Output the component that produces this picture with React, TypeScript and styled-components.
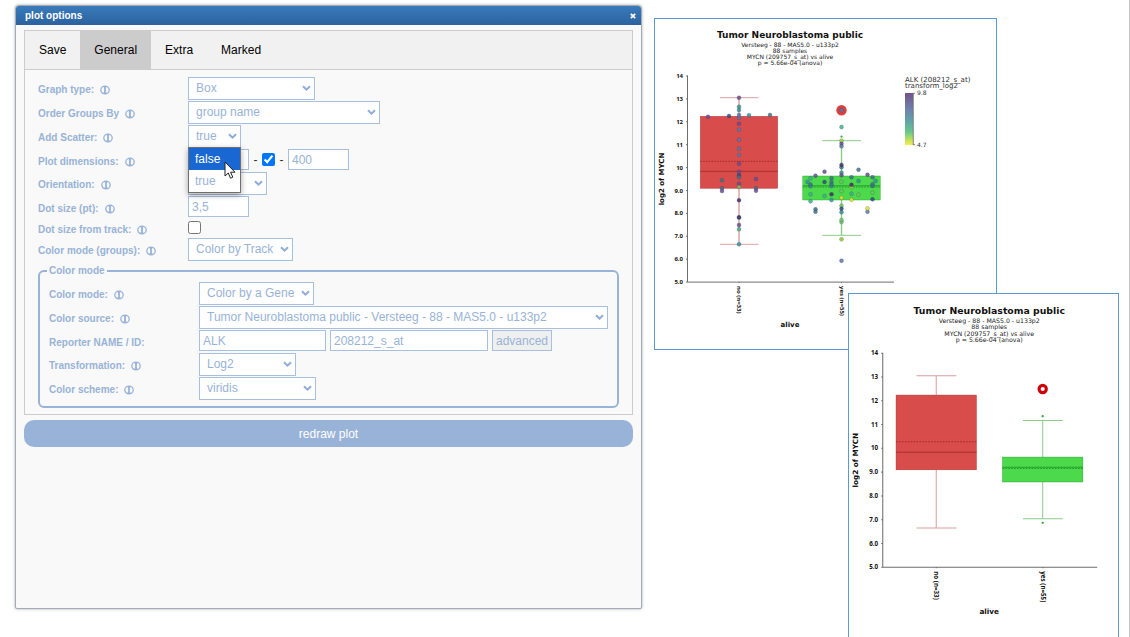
import React, { useId } from "react";
import styled, { createGlobalStyle } from "styled-components";

const ink = "#98b3d7";
const line = "#a8c0df";
const sans = `"Liberation Sans", Arial, sans-serif`;
const plotSans = `"DejaVu Sans", Verdana, sans-serif`;
const tickSans = `"Noto Sans", "Open Sans", sans-serif`;

const GlobalStyle = createGlobalStyle`
  *, *::before, *::after { box-sizing: border-box; }
  body { margin: 0; background: #fff; font-family: ${sans}; font-size: 12px; }
  button, input, select { font-family: inherit; font-size: 12px; }
`;

const Page = styled.main`
  display: grid;
  grid-template-columns: minmax(0, 627fr) minmax(0, 487fr);
  grid-template-rows: minmax(0, 1fr);
  height: 100vh;
  padding-left: 15px;
  border-right: 1px solid #c4c4c4;
  overflow: hidden;
`;

const Dialog = styled.section`
  display: flex;
  flex-direction: column;
  margin: 5px 0 28px;
  border: 1px solid #a3abb8;
  border-radius: 4px 4px 2px 2px;
  background: #f9f9f9;
  box-shadow: 0 0 3px rgba(0, 0, 0, 0.35);
`;

const TitleBar = styled.header`
  display: flex;
  align-items: center;
  justify-content: space-between;
  height: 19px;
  padding: 0 5px 0 9px;
  border-radius: 3px 3px 0 0;
  background: linear-gradient(#3a7abb, #2b629f);
  color: #fff;
`;

const DialogTitle = styled.h1`
  margin: 0;
  font-size: 10px;
  line-height: 12px;
  font-weight: bold;
`;

const CloseButton = styled.button`
  display: flex;
  padding: 1px 0 0;
  border: 0;
  background: none;
  color: #fff;
`;

const DialogBody = styled.div`
  display: flex;
  flex-direction: column;
  gap: 5px;
  padding: 5px 8px;
`;

const Panel = styled.div`
  border: 1px solid #ccc;
`;

const Tabs = styled.nav`
  display: flex;
  height: 39px;
  border-bottom: 1px solid #ccc;
  background: #f1f1f1;
`;

const Tab = styled.button<{ $active?: boolean }>`
  padding: 0 14px;
  border: 0;
  background: ${(p) => (p.$active ? "#ccc" : "transparent")};
  color: #000;
`;

const Form = styled.form`
  padding: 7px 13px 6px;
`;

const Row = styled.div<{ $kind?: "select" | "input" | "check" }>`
  display: grid;
  grid-template-columns: 150px minmax(0, 1fr);
  align-items: start;
  height: ${(p) => (p.$kind === "input" ? 23 : p.$kind === "check" ? 19 : 24)}px;
`;

const LabelCell = styled.div`
  display: flex;
  align-items: center;
  gap: 6px;
  height: 100%;
  padding-top: 2px;
  color: ${ink};
`;

const Label = styled.label`
  font-size: 10px;
  line-height: 12px;
  font-weight: bold;
  white-space: nowrap;
`;

const Controls = styled.div`
  position: relative;
  display: flex;
  align-items: center;
  gap: 4px;
`;

const Dash = styled.span`
  width: 5px;
  color: #333;
  text-align: center;
`;

const SelectBox = styled.span<{ $width: number }>`
  display: grid;
  width: ${(p) => p.$width}px;
  max-width: 100%;
  align-items: center;

  > * { grid-area: 1 / 1; }
  > svg { justify-self: end; margin-right: 4px; pointer-events: none; }
`;

const NativeSelect = styled.select`
  appearance: none;
  width: 100%;
  height: 23px;
  padding: 0 16px 1px 7px;
  border: 1px solid ${line};
  border-radius: 0;
  background: #fff;
  color: ${ink};
`;

const TextInput = styled.input<{ $width: number }>`
  width: ${(p) => p.$width}px;
  height: 21px;
  padding: 0 3px;
  border: 1px solid ${line};
  background: #fff;
  color: ${ink};
`;

const Tick = styled.input`
  width: 13px;
  height: 13px;
  margin: 0;
`;

const CheckArea = styled.div`
  display: flex;
  padding-top: 2px;
`;

const SmallButton = styled.button`
  height: 21px;
  padding: 0 3px;
  border: 1px solid ${line};
  background: #efefef;
  color: ${ink};
`;

const Group = styled.fieldset`
  min-width: 0;
  margin: 3px 0 0;
  padding: 5px 9px;
  border: 2px solid ${ink};
  border-radius: 6px;
`;

const Legend = styled.legend`
  margin-left: -2px;
  padding: 0 2px;
  color: ${ink};
  font-size: 10px;
  line-height: 12px;
  font-weight: bold;
`;

const RedrawButton = styled.button`
  height: 27px;
  border: 0;
  border-radius: 10px;
  background: ${ink};
  color: #fff;
`;

const Popup = styled.ul`
  position: absolute;
  z-index: 1;
  top: 22px;
  left: 0;
  width: 53px;
  margin: 0;
  padding: 0;
  border: 1px solid #707070;
  background: #fff;
  box-shadow: 0 2px 6px rgba(0, 0, 0, 0.35);
  list-style: none;
`;

const PopupItem = styled.li<{ $active?: boolean }>`
  height: 22px;
  padding: 0 6px;
  line-height: 22px;
  background: ${(p) => (p.$active ? "#1967d2" : "#fff")};
  color: ${(p) => (p.$active ? "#fff" : ink)};
`;

const Pointer = styled.svg`
  position: absolute;
  z-index: 2;
  top: 36px;
  left: 36px;
`;

const Stage = styled.div`
  padding: 18px 0 0 12px;
`;

const PlotFrame = styled.figure<{ $width: number; $front?: boolean }>`
  position: relative;
  width: ${(p) => p.$width}px;
  margin: ${(p) => (p.$front ? "-57px 0 0 194px" : "0")};
  border: 1px solid #5b9bd5;
  background: #fff;

  > svg { display: block; width: 100%; }
`;

const InfoIcon = () => (
  <svg width="10" height="10" viewBox="0 0 10 10" fill="none" aria-hidden="true">
    <ellipse cx="5" cy="5" rx="4.2" ry="3.9" stroke={ink} strokeWidth="1.3" />
    <path d="M5 1.2v7.6" stroke={ink} strokeWidth="1.8" />
    <path d="M3.4 7.9h3.2M3.8 2.3h2.4" stroke={ink} />
  </svg>
);

const Chevron = () => (
  <svg width="9" height="7" viewBox="0 0 9 7" fill="none" aria-hidden="true">
    <path d="M1 1.2 4.5 4.7 8 1.2" stroke="#8fadd8" strokeWidth="2" />
  </svg>
);

type FieldProps = {
  label: string;
  id: string;
  info?: boolean;
  kind?: "select" | "input" | "check";
  children: React.ReactNode;
};

const Field = ({ label, id, info = true, kind, children }: FieldProps) => (
  <Row $kind={kind}>
    <LabelCell>
      <Label htmlFor={id}>{label}</Label>
      {info && <InfoIcon />}
    </LabelCell>
    {children}
  </Row>
);

const Select = ({ id, width, value, options }: { id: string; width: number; value: string; options?: string[] }) => (
  <SelectBox $width={width}>
    <NativeSelect id={id} defaultValue={value}>
      {(options ?? [value]).map((o) => (
        <option key={o}>{o}</option>
      ))}
    </NativeSelect>
    <Chevron />
  </SelectBox>
);

type SelectFieldProps = { label: string; id: string; width: number; value: string };

const SelectField = ({ label, id, width, value }: SelectFieldProps) => (
  <Field label={label} id={id}>
    <Controls>
      <Select id={id} width={width} value={value} />
    </Controls>
  </Field>
);

/* Plot geometry, in svg units */
const TOP = 57;
const UNIT = 22.9;
const AXIS_X = 32.5;
const BOTTOM = TOP + UNIT * 9;
const HALF_BOX = 38.7;

const palette = {
  p: "#6b4a93",
  d: "#472a6b",
  n: "#33497f",
  b: "#5b78a8",
  s: "#3f7285",
  t: "#35939a",
  e: "#3fb08a",
  g: "#6cc65f",
  l: "#a5cf3f",
  y: "#e6de2a",
};

type Dot = [number, number, keyof typeof palette];

const noDots: Dot[] = [
  [0, 78.7, "p"], [0, 87.7, "t"], [0, 91, "t"], [0, 96, "b"], [0, 98.7, "b"],
  [-31, 97.7, "p"], [-10, 97, "n"], [10, 96.3, "t"], [31, 96, "s"],
  [0, 104.7, "p"], [0, 110.7, "b"], [0, 120.7, "b"], [0, 129.7, "b"], [0, 136, "b"],
  [0, 144.7, "p"], [0, 152.7, "p"], [0, 156.3, "n"], [0, 158.3, "s"],
  [-17, 161.3, "s"], [17, 160, "p"], [0, 164.7, "p"], [0, 168, "g"],
  [-17, 169.3, "s"], [-17, 172, "p"], [17, 169.3, "s"], [17, 171.7, "p"],
  [0, 181.3, "d"], [0, 198.7, "e"], [0, 198.2, "d"], [0, 206, "p"], [0, 210.3, "e"], [0, 225.3, "t"],
];

const yesDots: Dot[] = [
  [0, 91.3, "b"], [0, 108, "e"], [0, 121.7, "l"], [0, 124.7, "p"], [0, 127.3, "b"],
  [0, 148.3, "s"], [0, 145.9, "d"], [0, 153.7, "t"], [0, 156.3, "p"],
  [-17, 152.7, "p"], [17, 150.7, "s"], [-26, 156.7, "p"], [26, 155.7, "p"],
  [-31, 159.3, "e"], [-10, 159.3, "s"], [10, 158.3, "s"], [31, 158.3, "s"],
  [-34, 163, "t"], [-17, 163, "n"], [-10, 163, "s"], [0, 162.7, "g"], [17, 162, "t"], [34, 162, "t"],
  [-31, 167.3, "t"], [-31, 165.5, "s"], [-10, 167.2, "t"], [-10, 165.6, "s"],
  [10, 168, "l"], [10, 165.7, "d"], [31, 167, "s"], [31, 165.3, "s"],
  [0, 172, "g"], [-31, 175.3, "e"], [-10, 175.3, "d"], [-17, 177, "e"], [10, 174.7, "e"],
  [17, 175.7, "g"], [31, 173.7, "g"], [0, 178.7, "y"], [10, 180.7, "y"], [-10, 181, "t"],
  [31, 180.3, "n"], [-31, 182.3, "e"], [0, 186.7, "g"], [0, 193.3, "t"], [0, 189.7, "n"],
  [-26, 190.3, "s"], [-26, 192.8, "s"], [26, 192.7, "b"], [26, 189.4, "y"],
  [0, 203, "g"], [0, 201, "g"], [0, 220.3, "l"], [0, 241.7, "b"],
];

type Box = { x: number; hi: number; top: number; mean: number; median: number; bottom: number; lo: number; fill: string; edge: string; stem: string };

const boxes: Box[] = [
  { x: 84, hi: 78.7, top: 97.3, mean: 142.3, median: 152.3, bottom: 169.3, lo: 225.3, fill: "#d94c4c", edge: "#a82a2a", stem: "#dba0a0" },
  { x: 186.5, hi: 121.7, top: 157, mean: 168, median: 166.8, bottom: 181, lo: 216.3, fill: "#4cd94c", edge: "#239a2a", stem: "#8dcb8d" },
];

const BoxPlot = ({ width, height, scatter }: { width: number; height: number; scatter?: boolean }) => {
  const gradient = useId();
  const ticks = [14, 13, 12, 11, 10, 9, 8, 7, 6, 5];
  return (
    <svg viewBox={`0 0 ${width} ${height}`} role="img" aria-label="Box plot of MYCN by alive">
      <g fontFamily={plotSans} fill="#222" textAnchor="middle">
        <text x="135" y="19" fontSize="9" fontWeight="bold" fill="#111">Tumor Neuroblastoma public</text>
        <g fontSize="6">
          <text x="135" y="28">Versteeg - 88 - MAS5.0 - u133p2</text>
          <text x="135" y="34">88 samples</text>
          <text x="135" y="40">MYCN (209757_s_at) vs alive</text>
          <text x="135" y="46">p = 5.66e-04 (anova)</text>
        </g>
        <g fontSize="7" fontWeight="bold" fill="#111">
          <text transform="translate(9 160) rotate(-90)">log2 of MYCN</text>
          <text x="135" y="308">alive</text>
        </g>
      </g>
      <g fontFamily={tickSans} fontSize="6" fontWeight="bold" fill="#111">
        {ticks.map((t) => (
          <text key={t} x="28" y={TOP + (14 - t) * UNIT + 2} textAnchor="end">
            {t > 9 ? t : t.toFixed(1)}
          </text>
        ))}
        <text transform="translate(82 267) rotate(90)">no (n=33)</text>
        <text transform="translate(184.5 267) rotate(90)">yes (n=55)</text>
      </g>
      <path
        d={`M${AXIS_X} ${TOP - 0.5}V${BOTTOM}H239 ${ticks.map((t) => `M${AXIS_X - 1.5} ${TOP + (14 - t) * UNIT}h1.5`).join("")}M84 ${BOTTOM}v1M186.5 ${BOTTOM}v1`}
        stroke="#6e6e6e"
        fill="none"
      />
      {boxes.map((b) => (
        <g key={b.x} fill="none">
          <path d={`M${b.x} ${b.hi}V${b.top}M${b.x} ${b.bottom}V${b.lo}`} stroke={b.stem} strokeWidth={scatter ? 1.4 : 1} />
          <path d={`M${b.x - 19} ${b.hi}h38.5M${b.x - 19} ${b.lo}h38.5`} stroke={b.stem} />
          <rect x={b.x - HALF_BOX} y={b.top} width={HALF_BOX * 2} height={b.bottom - b.top} fill={b.fill} stroke={b.edge} strokeWidth="0.4" />
          <path d={`M${b.x - HALF_BOX} ${b.median}h${HALF_BOX * 2}`} stroke={b.edge} strokeWidth="0.9" />
          <path d={`M${b.x - HALF_BOX} ${b.mean}h${HALF_BOX * 2}`} stroke={b.edge} strokeDasharray="1.6 1.2" />
        </g>
      ))}
      <g fill="#2fae35">
        <circle cx="186.5" cy="117.7" r="1.1" />
        <circle cx="186.5" cy="220.3" r="1.1" />
      </g>
      {scatter ? (
        <>
          <circle cx="186.5" cy="91.3" r="5.2" fill="#d94040" />
          {[
            { x: 84, dots: noDots },
            { x: 186.5, dots: yesDots },
          ].map((g) =>
            g.dots.map(([dx, y, c], i) => (
              <circle key={`${g.x}-${i}`} cx={g.x + dx} cy={y} r="2" fill={palette[c]} fillOpacity="0.85" stroke="#2c3e50" strokeOpacity="0.45" strokeWidth="0.5" />
            )),
          )}
          <linearGradient id={gradient} x1="0" y1="0" x2="0" y2="1">
            <stop offset="0" stopColor="#74508a" />
            <stop offset="0.3" stopColor="#6f80ad" />
            <stop offset="0.55" stopColor="#5fa5a8" />
            <stop offset="0.75" stopColor="#68c78c" />
            <stop offset="0.9" stopColor="#bfe05c" />
            <stop offset="1" stopColor="#f8ea50" />
          </linearGradient>
          <rect x="250" y="74" width="8" height="52" fill={`url(#${gradient})`} />
          <path d="M258.3 74V126M258 74.3h2M258 125.7h2" stroke="#666" strokeWidth="0.8" />
          <g fontFamily={plotSans} fill="#333">
            <text x="250" y="63" fontSize="7">ALK (208212_s_at)</text>
            <text x="250" y="69" fontSize="7">transform_log2</text>
            <g fontSize="6">
              <text x="262" y="76">9.8</text>
              <text x="262" y="128">4.7</text>
            </g>
          </g>
        </>
      ) : (
        <circle cx="186.5" cy="91.5" r="3.5" fill="none" stroke="#cb0008" strokeWidth="3" />
      )}
    </svg>
  );
};

export default function App() {
  return (
    <>
      <GlobalStyle />
      <Page>
        <Dialog aria-label="plot options">
          <TitleBar>
            <DialogTitle>plot options</DialogTitle>
            <CloseButton type="button" aria-label="Close">
              <svg width="6" height="6" viewBox="0 0 6 6" aria-hidden="true">
                <path d="M.8 .8 5.2 5.2M5.2 .8 .8 5.2" stroke="currentColor" strokeWidth="1.8" />
              </svg>
            </CloseButton>
          </TitleBar>
          <DialogBody>
            <Panel>
              <Tabs>
                <Tab type="button">Save</Tab>
                <Tab type="button" $active>General</Tab>
                <Tab type="button">Extra</Tab>
                <Tab type="button">Marked</Tab>
              </Tabs>
              <Form id="plot-form" onSubmit={(e) => e.preventDefault()}>
                <SelectField label="Graph type:" id="graph-type" width={127} value="Box" />
                <SelectField label="Order Groups By" id="order" width={192} value="group name" />
                <Field label="Add Scatter:" id="scatter">
                  <Controls>
                    <Select id="scatter" width={53} value="true" options={["false", "true"]} />
                    <Popup role="listbox" aria-label="Add Scatter">
                      <PopupItem role="option" aria-selected="true" $active>false</PopupItem>
                      <PopupItem role="option" aria-selected="false">true</PopupItem>
                    </Popup>
                    <Pointer width="12" height="19" viewBox="0 0 12 19" aria-hidden="true">
                      <path d="M1 1v14l3.3-3 2.2 5.2 2.3-1-2.2-5H11z" fill="#fff" stroke="#222" strokeLinejoin="round" />
                    </Pointer>
                  </Controls>
                </Field>
                <Field label="Plot dimensions:" id="plot-width" kind="input">
                  <Controls>
                    <TextInput id="plot-width" $width={61} defaultValue="" />
                    <Dash>-</Dash>
                    <Tick type="checkbox" defaultChecked aria-label="Keep ratio" />
                    <Dash>-</Dash>
                    <TextInput $width={61} defaultValue="400" aria-label="Plot height" />
                  </Controls>
                </Field>
                <SelectField label="Orientation:" id="orientation" width={79} value="" />
                <Field label="Dot size (pt):" id="dot-size" kind="input">
                  <Controls>
                    <TextInput id="dot-size" $width={61} defaultValue="3,5" />
                  </Controls>
                </Field>
                <Field label="Dot size from track:" id="dot-track" kind="check">
                  <CheckArea>
                    <Tick type="checkbox" id="dot-track" />
                  </CheckArea>
                </Field>
                <SelectField label="Color mode (groups):" id="color-groups" width={105} value="Color by Track" />
                <Group>
                  <Legend>Color mode</Legend>
                  <SelectField label="Color mode:" id="color-mode" width={115} value="Color by a Gene" />
                  <SelectField label="Color source:" id="color-source" width={409} value="Tumor Neuroblastoma public - Versteeg - 88 - MAS5.0 - u133p2" />
                  <Field label="Reporter NAME / ID:" id="reporter" kind="input" info={false}>
                    <Controls>
                      <TextInput id="reporter" $width={127} defaultValue="ALK" />
                      <TextInput $width={158} defaultValue="208212_s_at" aria-label="Reporter ID" />
                      <SmallButton type="button">advanced</SmallButton>
                    </Controls>
                  </Field>
                  <SelectField label="Transformation:" id="transformation" width={97} value="Log2" />
                  <SelectField label="Color scheme:" id="color-scheme" width={117} value="viridis" />
                </Group>
              </Form>
            </Panel>
            <RedrawButton type="submit" form="plot-form">redraw plot</RedrawButton>
          </DialogBody>
        </Dialog>
        <Stage>
          <PlotFrame $width={343}>
            <BoxPlot width={341} height={330} scatter />
          </PlotFrame>
          <PlotFrame $width={271} $front>
            <BoxPlot width={259} height={340} />
          </PlotFrame>
        </Stage>
      </Page>
    </>
  );
}
